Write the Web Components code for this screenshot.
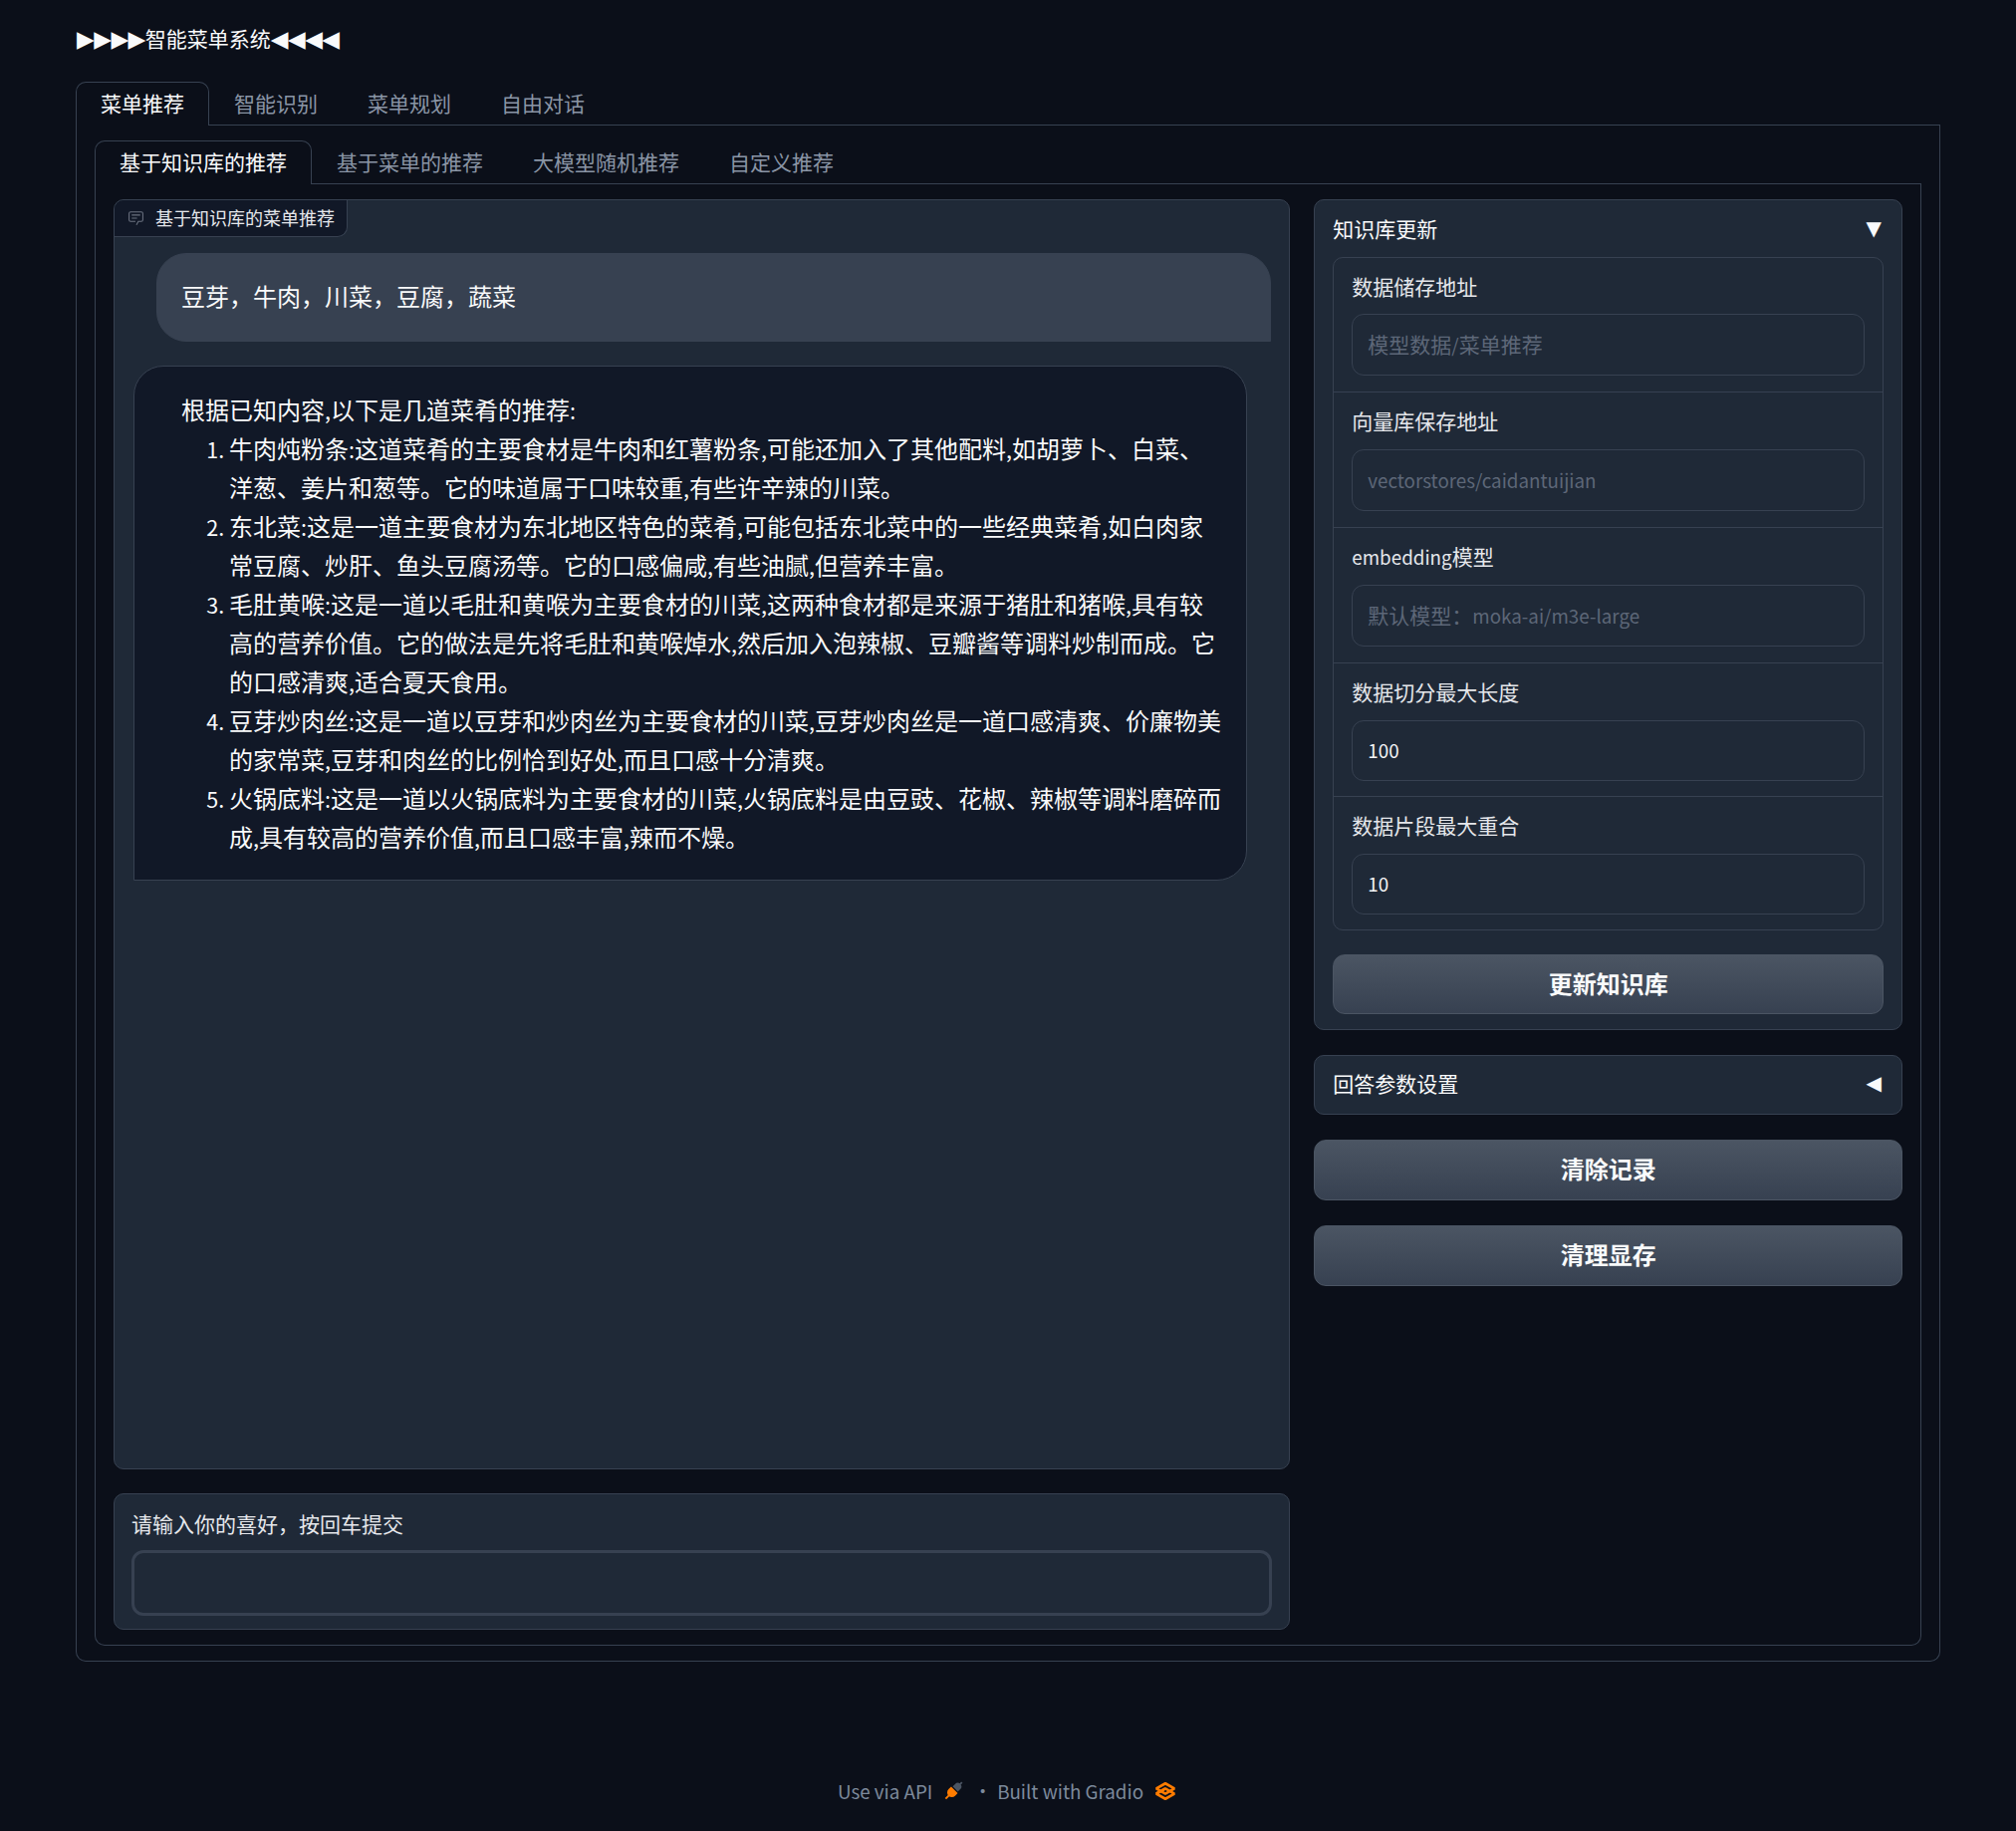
<!DOCTYPE html>
<html lang="zh">
<head>
<meta charset="utf-8">
<title>智能菜单系统</title>
<style>
  html, body {
    margin: 0;
    background: #0b0f19;
    color: #f3f4f6;
    font-family: "Noto Sans CJK SC", "Noto Sans", sans-serif;
  }
  ol { margin: 0; padding: 0 0 0 48px; }
  /* latin runs are a bit smaller than the CJK around them */
  .l { font-size: 21.5px; line-height: 0; }
  li::marker { font-size: 21.5px; }
</style>
</head>
<body>

<gr-app>
  <gr-tabs labels="菜单推荐|智能识别|菜单规划|自由对话" outer>
    <gr-tabs labels="基于知识库的推荐|基于菜单的推荐|大模型随机推荐|自定义推荐">
      <gr-row>
        <gr-column slot="left">
          <chat-panel label="基于知识库的菜单推荐">
            <chat-bubble role="user">豆芽，牛肉，川菜，豆腐，蔬菜</chat-bubble>
            <chat-bubble role="bot">
              根据已知内容,以下是几道菜肴的推荐:
              <ol>
                <li>牛肉炖粉条:这道菜肴的主要食材是牛肉和红薯粉条,可能还加入了其他配料,如胡萝卜、白菜、<br>洋葱、姜片和葱等。它的味道属于口味较重,有些许辛辣的川菜。</li>
                <li>东北菜:这是一道主要食材为东北地区特色的菜肴,可能包括东北菜中的一些经典菜肴,如白肉家<br>常豆腐、炒肝、鱼头豆腐汤等。它的口感偏咸,有些油腻,但营养丰富。</li>
                <li>毛肚黄喉:这是一道以毛肚和黄喉为主要食材的川菜,这两种食材都是来源于猪肚和猪喉,具有较<br>高的营养价值。它的做法是先将毛肚和黄喉焯水,然后加入泡辣椒、豆瓣酱等调料炒制而成。它<br>的口感清爽,适合夏天食用。</li>
                <li>豆芽炒肉丝:这是一道以豆芽和炒肉丝为主要食材的川菜,豆芽炒肉丝是一道口感清爽、价廉物美<br>的家常菜,豆芽和肉丝的比例恰到好处,而且口感十分清爽。</li>
                <li>火锅底料:这是一道以火锅底料为主要食材的川菜,火锅底料是由豆豉、花椒、辣椒等调料磨碎而<br>成,具有较高的营养价值,而且口感丰富,辣而不燥。</li>
              </ol>
            </chat-bubble>
          </chat-panel>
          <prompt-box label="请输入你的喜好，按回车提交"></prompt-box>
        </gr-column>
        <gr-column slot="right">
          <gr-accordion label="知识库更新" open>
            <gr-form>
              <gr-field label="数据储存地址" placeholder="模型数据/菜单推荐"></gr-field>
              <gr-field label="向量库保存地址" placeholder="vectorstores/caidantuijian"></gr-field>
              <gr-field label="embedding模型" placeholder="默认模型：moka-ai/m3e-large"></gr-field>
              <gr-field label="数据切分最大长度" value="100" short></gr-field>
              <gr-field label="数据片段最大重合" value="10" short></gr-field>
            </gr-form>
            <gr-button small>更新知识库</gr-button>
          </gr-accordion>
          <gr-accordion label="回答参数设置"></gr-accordion>
          <gr-button>清除记录</gr-button>
          <gr-button>清理显存</gr-button>
        </gr-column>
      </gr-row>
    </gr-tabs>
  </gr-tabs>
</gr-app>

<script>
// shared helper: open shadow root from a template string
function shadow(el, html) {
  el.attachShadow({ mode: 'open' }).innerHTML = html;
}

// wrap latin runs so they can get their own size
function latin(text) {
  return text.replace(/[A-Za-z0-9\-\/.]+/g, '<span class="l">$&</span>');
}

class GrApp extends HTMLElement {
  constructor() {
    super();
    shadow(this, `
      <style>
        :host { display: block; padding: 22px 76px 0; box-sizing: border-box; }
        h1 {
          margin: 0 0 28px 1px;
          height: 32px;
          font: 400 21px/32px "Noto Sans CJK SC", sans-serif;
          color: #f9fafb;
        }
        .tri { font-family: "DejaVu Sans", sans-serif; font-size: 23px; line-height: 0; letter-spacing: -.5px; }
        footer {
          margin-top: 118px;
          height: 24px;
          display: flex;
          justify-content: center;
          align-items: center;
          font-size: 18.8px;
          line-height: 24px;
          color: #7d8a9c;
        }
        svg { display: block; flex: none; }
        .api { width: 22px; height: 22px; margin-left: 10px; }
        .dot { margin: 0 5px 0 9px; }
        .logo { width: 26px; height: 26px; margin-left: 9px; color: #ff7c00; }
      </style>
      <h1><span class="tri">▶▶▶▶</span>智能菜单系统<span class="tri">◀◀◀◀</span></h1>
      <slot></slot>
      <footer>
        <span>Use via API</span>
        <svg class="api" viewBox="0 0 18 18">
          <g transform="rotate(45 9 9)">
            <path d="M6 6.6V3.8a3 3 0 0 1 6 0v2.8z" fill="#4b5563"/>
            <rect x="8.3" y="-1.2" width="1.4" height="2.6" fill="#4b5563"/>
            <path d="M5.2 7.6h7.6v3a3.8 3.8 0 0 1-7.6 0z" fill="#ff7c00"/>
            <rect x="8.2" y="13.8" width="1.6" height="4" fill="#ff7c00"/>
          </g>
        </svg>
        <span class="dot">·</span>
        <span>Built with Gradio</span>
        <svg class="logo" viewBox="0 0 576 576" fill="none" stroke="currentColor" stroke-width="59" stroke-linejoin="bevel">
          <path d="M287.5 229L86 344.5L287.5 460L489 344.5L287.5 229Z"/>
          <path d="M287.5 116L86 231.5L287.5 347L489 231.5L287.5 116Z"/>
          <path d="M86 344L288 229"/>
        </svg>
      </footer>
    `);
  }
}

class GrTabs extends HTMLElement {
  constructor() {
    super();
    const labels = this.getAttribute('labels').split('|');
    const tabs = labels.map((t, i) => `<button class="${i === 0 ? 'on' : ''}">${t}</button>`).join('');
    shadow(this, `
      <style>
        :host { display: block; }
        nav { display: flex; height: 44px; }
        button {
          all: unset;
          box-sizing: border-box;
          height: 44px;
          padding: 1px 25px 3px;
          border-bottom: 1px solid #374151;
          font-size: 21px;
          color: #8a95a5;
          flex: none;
        }
        button.on {
          color: #f9fafb;
          padding: 0 24px 4px;
          border: 1px solid #374151;
          border-bottom: none;
          border-radius: 10px 10px 0 0;
        }
        i { flex: 1; border-bottom: 1px solid #374151; }
        .panel {
          border: 1px solid #374151;
          border-top: none;
          border-radius: 0 0 10px 10px;
          padding: 15px 18px 15px;
        }
      </style>
      <nav>${tabs}<i></i></nav>
      <div class="panel"><slot></slot></div>
    `);
  }
}

class GrRow extends HTMLElement {
  constructor() {
    super();
    shadow(this, `
      <style>
        :host { display: grid; grid-template-columns: 2fr 1fr; gap: 24px; }
      </style>
      <slot name="left"></slot>
      <slot name="right"></slot>
    `);
  }
}

class GrColumn extends HTMLElement {
  constructor() {
    super();
    shadow(this, `
      <style>
        :host { display: flex; flex-direction: column; gap: 25px; min-width: 0; }
      </style>
      <slot></slot>
    `);
  }
}

class ChatPanel extends HTMLElement {
  constructor() {
    super();
    shadow(this, `
      <style>
        :host {
          display: flex;
          flex-direction: column;
          gap: 24px;
          position: relative;
          box-sizing: border-box;
          height: 1275px;
          padding: 53px 18px 0 19px;
          background: #1f2937;
          border: 1px solid #374151;
          border-radius: 10px;
          overflow: hidden;
        }
        .tag {
          position: absolute;
          left: 0;
          top: 0;
          height: 37px;
          box-sizing: border-box;
          display: flex;
          align-items: center;
          gap: 11px;
          padding: 0 12px 2px 13px;
          background: #111827;
          border-right: 1px solid #374151;
          border-bottom: 1px solid #374151;
          border-radius: 0 0 10px 0;
          font-size: 18px;
          color: #e5e7eb;
        }
        svg { width: 17px; height: 17px; color: #6b7280; display: block; }
      </style>
      <div class="tag">
        <svg viewBox="0 0 32 32" fill="currentColor">
          <path d="M17.74 30L16 29l4-7h6a2 2 0 0 0 2-2V8a2 2 0 0 0-2-2H6a2 2 0 0 0-2 2v12a2 2 0 0 0 2 2h9v2H6a4 4 0 0 1-4-4V8a4 4 0 0 1 4-4h20a4 4 0 0 1 4 4v12a4 4 0 0 1-4 4h-4.84Z"/>
          <path d="M8 10h16v2H8zm0 6h10v2H8z"/>
        </svg>
        ${this.getAttribute('label')}
      </div>
      <slot></slot>
    `);
  }
}

class ChatBubble extends HTMLElement {
  constructor() {
    super();
    shadow(this, `
      <style>
        :host {
          display: block;
          box-sizing: border-box;
          border: 1px solid #374151;
          font-size: 24px;
          line-height: 39px;
          color: #f9fafb;
        }
        :host([role="user"]) {
          margin-left: 23px;
          height: 89px;
          padding: 22px 23px 0 24px;
          background: #374151;
          border-radius: 30px 30px 0 30px;
        }
        :host([role="bot"]) {
          margin-right: 24px;
          padding: 23px 10px 24px 47px;
          background: #111827;
          border-radius: 30px 30px 30px 0;
        }
      </style>
      <slot></slot>
    `);
  }
  connectedCallback() {
    // the half-width , and : come out narrower than in the CJK font
    if (this.getAttribute('role') === 'bot') {
      this.innerHTML = this.innerHTML.replace(/[,:]/g, '<span class="l">$&</span>');
    }
  }
}

class PromptBox extends HTMLElement {
  constructor() {
    super();
    shadow(this, `
      <style>
        :host {
          display: block;
          box-sizing: border-box;
          height: 137px;
          margin-top: -1px;
          padding: 14px 17px 0;
          background: #1f2937;
          border: 1px solid #374151;
          border-radius: 10px;
        }
        label { display: block; font-size: 21px; line-height: 30px; margin-bottom: 12px; color: #e5e7eb; }
        .area {
          box-sizing: border-box;
          height: 66px;
          border: 3px solid #374151;
          border-radius: 12px;
        }
      </style>
      <label>${this.getAttribute('label')}</label>
      <div class="area"></div>
    `);
  }
}

class GrAccordion extends HTMLElement {
  constructor() {
    super();
    const open = this.hasAttribute('open');
    shadow(this, `
      <style>
        :host {
          display: block;
          box-sizing: border-box;
          padding: 0 18px;
          background: #1f2937;
          border: 1px solid #374151;
          border-radius: 10px;
        }
        :host([open]) { padding-bottom: 15px; }
        header {
          height: ${open ? 57 : 58}px;
          padding-bottom: ${open ? 2 : 4}px;
          box-sizing: border-box;
          display: flex;
          align-items: center;
          justify-content: space-between;
          font-size: 21px;
          color: #f9fafb;
        }
        .tri { font-family: "DejaVu Sans", sans-serif; font-size: 20px; margin-right: 2px; }
        ::slotted(gr-button) { margin-top: 24px; }
      </style>
      <header>
        <span>${this.getAttribute('label')}</span>
        <span class="tri">${open ? '▼' : '◀'}</span>
      </header>
      <slot></slot>
    `);
  }
}

class GrForm extends HTMLElement {
  constructor() {
    super();
    shadow(this, `
      <style>
        :host {
          display: block;
          border: 1px solid #374151;
          border-radius: 10px;
          overflow: hidden;
        }
        ::slotted(gr-field:not(:first-child)) {
          border-top: 1px solid #374151;
          --label-gap: 14px;
        }
      </style>
      <slot></slot>
    `);
  }
}

class GrField extends HTMLElement {
  constructor() {
    super();
    const value = this.getAttribute('value');
    const short = this.hasAttribute('short');
    shadow(this, `
      <style>
        :host { display: block; padding: 14px 18px ${short ? 15 : 16}px; }
        label { display: block; font-size: 21px; line-height: 29px; margin-bottom: var(--label-gap, 13px); color: #e5e7eb; }
        .input {
          box-sizing: border-box;
          height: ${short ? 61 : 62}px;
          padding: 0 15px 3px;
          display: flex;
          align-items: center;
          border: 1px solid #374151;
          border-radius: 12px;
          font-size: 21px;
          color: ${value ? '#f3f4f6' : '#5d6778'};
        }
        .l { font-size: 18.8px; line-height: 0; }
      </style>
      <label>${latin(this.getAttribute('label'))}</label>
      <div class="input"><span>${latin(value || this.getAttribute('placeholder'))}</span></div>
    `);
  }
}

class GrButton extends HTMLElement {
  constructor() {
    super();
    shadow(this, `
      <style>
        :host {
          display: flex;
          align-items: center;
          justify-content: center;
          box-sizing: border-box;
          height: 61px;
          padding-bottom: 5px;
          background: linear-gradient(to bottom, #4b5563, #374151);
          border: 1px solid #4b5563;
          border-radius: 12px;
          font-size: 24px;
          font-weight: 600;
          color: #f9fafb;
        }
        :host([small]) { height: 60px; padding-bottom: 3px; }
      </style>
      <slot></slot>
    `);
  }
}

customElements.define('gr-app', GrApp);
customElements.define('gr-tabs', GrTabs);
customElements.define('gr-row', GrRow);
customElements.define('gr-column', GrColumn);
customElements.define('chat-panel', ChatPanel);
customElements.define('chat-bubble', ChatBubble);
customElements.define('prompt-box', PromptBox);
customElements.define('gr-accordion', GrAccordion);
customElements.define('gr-form', GrForm);
customElements.define('gr-field', GrField);
customElements.define('gr-button', GrButton);
</script>
</body>
</html>
